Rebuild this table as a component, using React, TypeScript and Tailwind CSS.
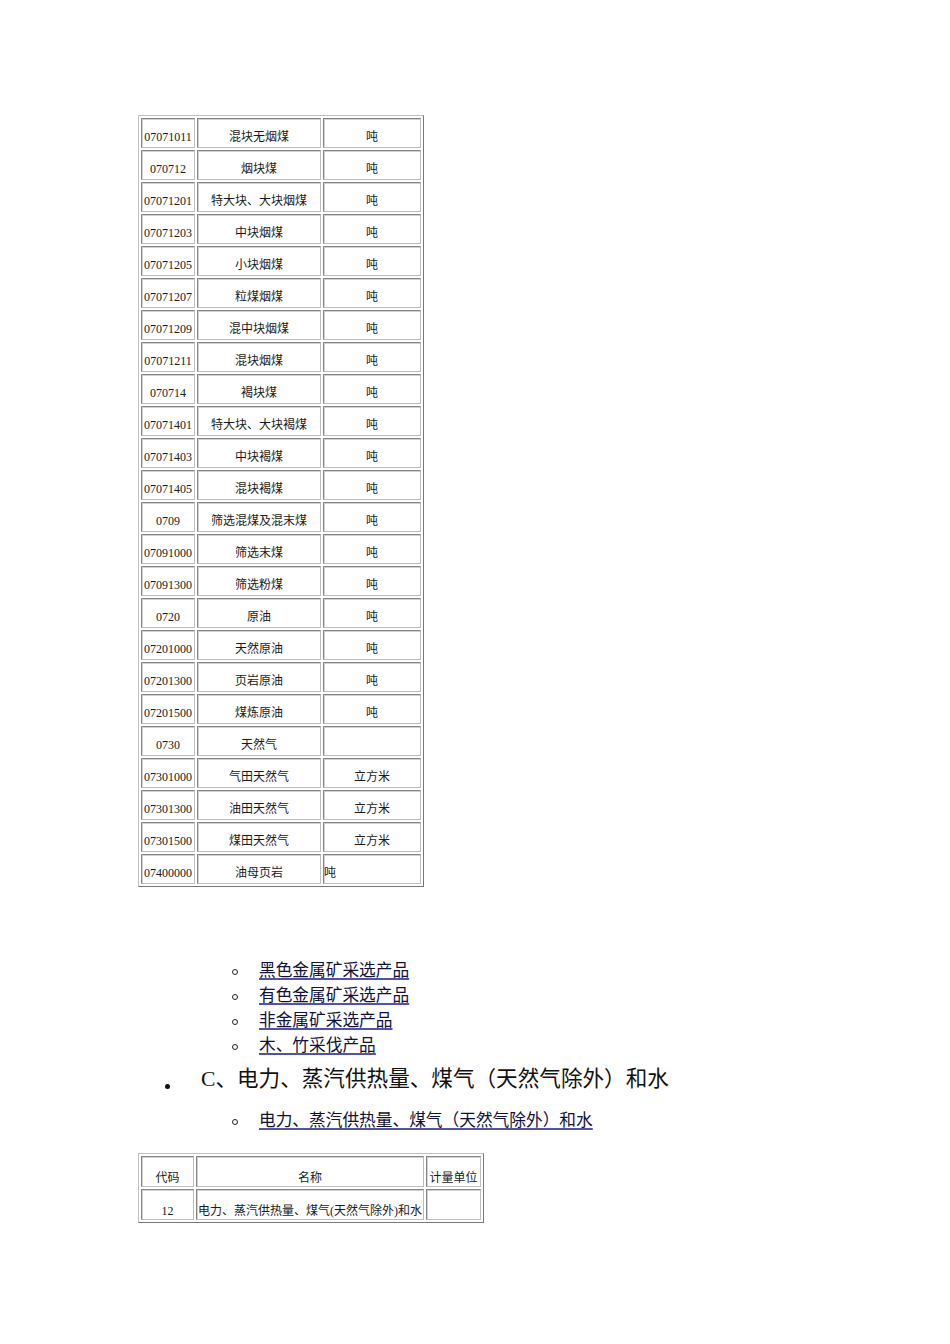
import React from "react";

const rows1: [string, string, string][] = [
  ["07071011", "混块无烟煤", "吨"],
  ["070712", "烟块煤", "吨"],
  ["07071201", "特大块、大块烟煤", "吨"],
  ["07071203", "中块烟煤", "吨"],
  ["07071205", "小块烟煤", "吨"],
  ["07071207", "粒煤烟煤", "吨"],
  ["07071209", "混中块烟煤", "吨"],
  ["07071211", "混块烟煤", "吨"],
  ["070714", "褐块煤", "吨"],
  ["07071401", "特大块、大块褐煤", "吨"],
  ["07071403", "中块褐煤", "吨"],
  ["07071405", "混块褐煤", "吨"],
  ["0709", "筛选混煤及混末煤", "吨"],
  ["07091000", "筛选末煤", "吨"],
  ["07091300", "筛选粉煤", "吨"],
  ["0720", "原油", "吨"],
  ["07201000", "天然原油", "吨"],
  ["07201300", "页岩原油", "吨"],
  ["07201500", "煤炼原油", "吨"],
  ["0730", "天然气", ""],
  ["07301000", "气田天然气", "立方米"],
  ["07301300", "油田天然气", "立方米"],
  ["07301500", "煤田天然气", "立方米"],
  ["07400000", "油母页岩", "吨"],
];

const font = { fontFamily: '"Liberation Serif", "Noto Sans CJK SC", serif' };

const tableCls =
  "border-separate border-spacing-[2px] border border-t-[#c0c0c0] border-l-[#c0c0c0] border-r-[#777777] border-b-[#777777] text-[12px] leading-[14px] text-[#1a1a1a]";
const cellBase =
  "p-0 align-bottom whitespace-nowrap border border-t-[#858585] border-l-[#858585] border-r-[#bdbdbd] border-b-[#bdbdbd] shadow-[inset_1px_1px_0_#d2d2d2]";
const cellCls = cellBase + " h-[30px] pb-[3px]";
const cellCls2 = cellBase + " h-[31px] pb-[1px]";

function SubItem({ text }: { text: string }) {
  return (
    <div className="flex h-[25px] items-center">
      <div className="ml-[232px] w-[6px] h-[6px] rounded-full border border-[#222] mt-[3px]" />
      <a
        href="#"
        className="ml-[21px] text-[16.7px] leading-[20px] text-[#10103a] underline decoration-[#5252a8] decoration-[1.5px] underline-offset-[2px]"
      >
        {text}
      </a>
    </div>
  );
}

export default function App() {
  return (
    <div className="w-[950px] h-[1344px] bg-white pt-[115px]" style={font}>
      <div className="pl-[138px]">
        <table className={tableCls}>
          <tbody>
            {rows1.map((r, i) => (
              <tr key={i}>
                <td className={cellCls + " w-[54px] text-center"}>{r[0]}</td>
                <td className={cellCls + " w-[124px] text-center"}>{r[1]}</td>
                <td
                  className={
                    cellCls +
                    " w-[98px] " +
                    (i === rows1.length - 1 ? "text-left" : "text-center")
                  }
                >
                  {r[2]}
                </td>
              </tr>
            ))}
          </tbody>
        </table>
      </div>

      <div className="mt-[71px]">
        <SubItem text="黑色金属矿采选产品" />
        <SubItem text="有色金属矿采选产品" />
        <SubItem text="非金属矿采选产品" />
        <SubItem text="木、竹采伐产品" />
        <div className="flex h-[40px] items-center">
          <div className="ml-[165px] w-[5px] h-[5px] rounded-full bg-[#111] mt-[17px]" />
          <div className="ml-[31px] mt-[1px] text-[21.6px] leading-[26px] text-[#111]">
            C、电力、蒸汽供热量、煤气（天然气除外）和水
          </div>
        </div>
        <div className="mt-[10px]">
          <SubItem text="电力、蒸汽供热量、煤气（天然气除外）和水" />
        </div>
      </div>

      <div className="pl-[138px] mt-[20px]">
        <table className={tableCls}>
          <tbody>
            <tr>
              <td className={cellCls2 + " w-[53px] text-center"}>代码</td>
              <td className={cellCls2 + " w-[228px] text-center"}>名称</td>
              <td className={cellCls2 + " w-[55px] text-center"}>计量单位</td>
            </tr>
            <tr>
              <td className={cellCls2 + " text-center"}>12</td>
              <td className={cellCls2 + " text-center"}>
                电力、蒸汽供热量、煤气(天然气除外)和水
              </td>
              <td className={cellCls2}></td>
            </tr>
          </tbody>
        </table>
      </div>
    </div>
  );
}
